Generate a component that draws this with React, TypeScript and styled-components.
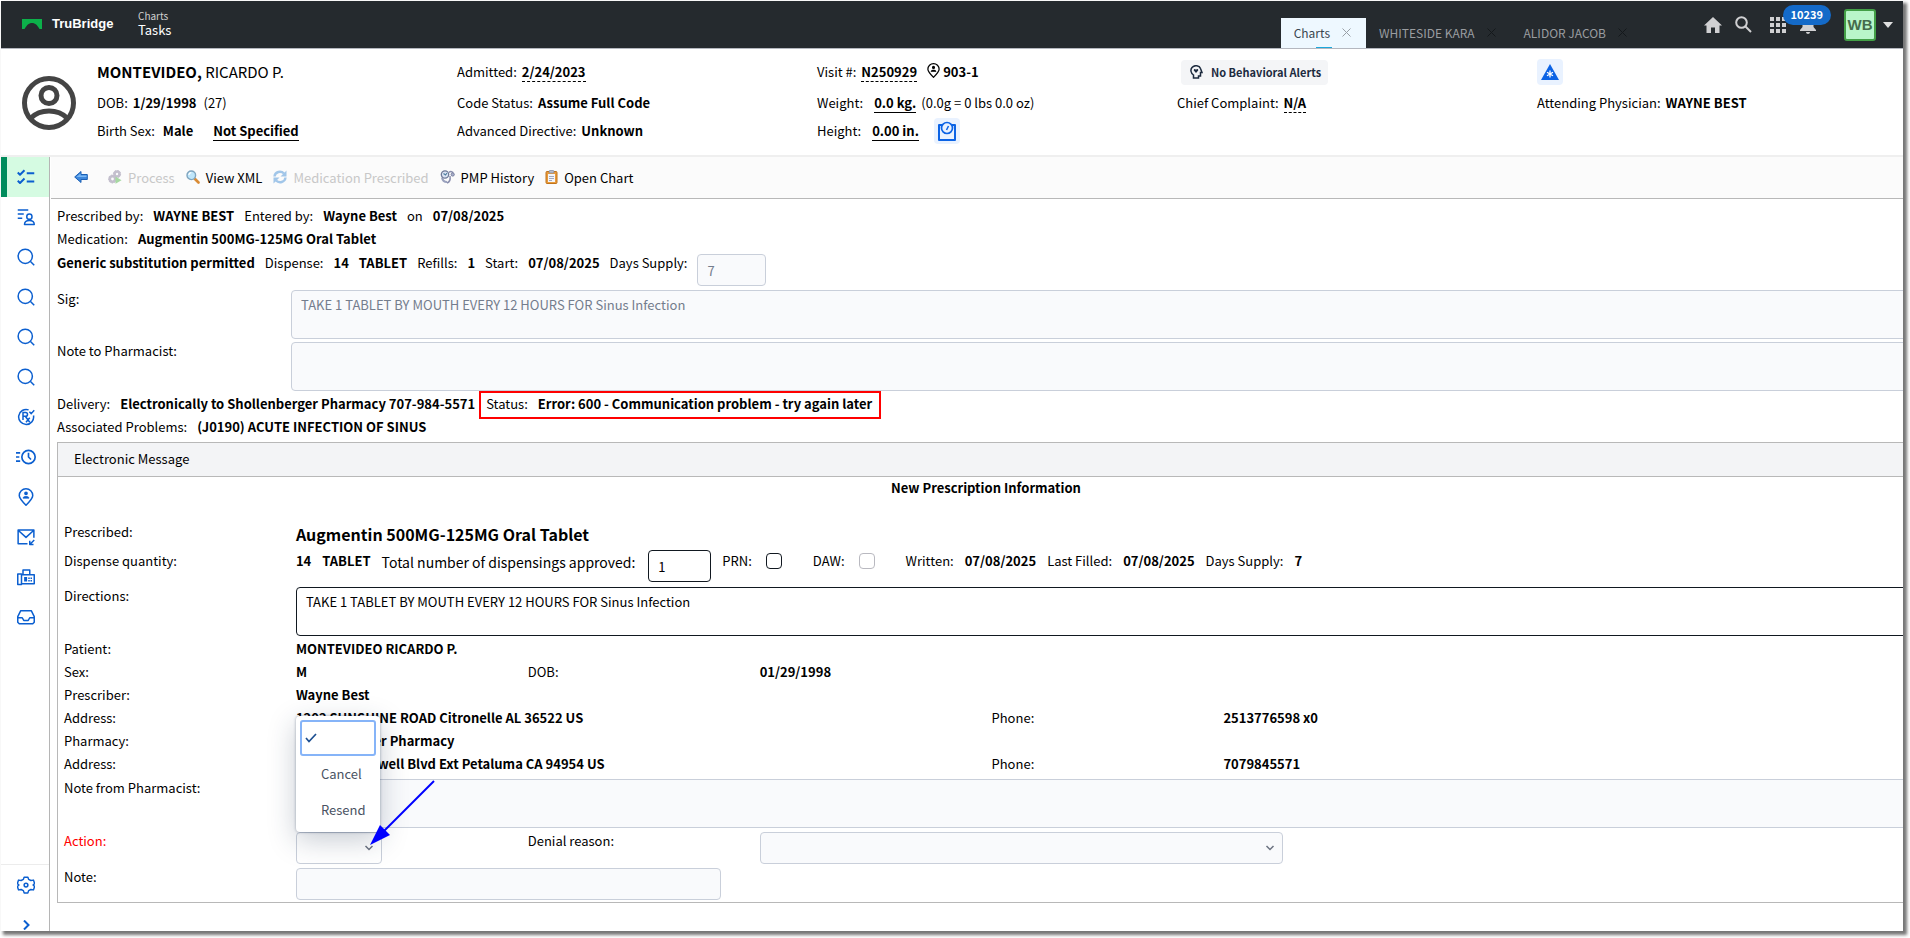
import React from "react";
import styled, { createGlobalStyle, css } from "styled-components";

const Global = createGlobalStyle`
  *, *::before, *::after { box-sizing: border-box; }
  body {
    margin: 0;
    background: #fff;
    color: #000;
    font-family: "Noto Sans CJK SC", "Noto Sans", sans-serif;
    font-size: 13px;
    line-height: 21px;
    overflow: hidden;
  }
  button, input, textarea, select { font: inherit; color: inherit; }
  button { background: none; border: 0; padding: 0; cursor: pointer; }
  ul { list-style: none; margin: 0; padding: 0; }
  svg { display: block; flex: none; }
`;

/* ---------- frame ---------- */
const Frame = styled.div`
  display: flex;
  flex-direction: column;
  height: calc(100vh - 8px);
  margin: 1px 7px 7px 1px;
  overflow: hidden;
  box-shadow: 3px 3px 3px 1px #777;
`;

/* ---------- top bar ---------- */
const TopBar = styled.header`
  display: flex;
  flex: none;
  height: 48px;
  padding-left: 21px;
  background: #252a2e;
  border-bottom: 1px solid #b4b7bf;
  color: #fff;
`;
const Brand = styled.a`
  display: flex;
  align-items: center;
  gap: 10px;
  width: 116px;
  padding-bottom: 2px;
  color: #fff;
  font: bold 13px/20px "Liberation Sans", Arial, sans-serif;
  text-decoration: none;
`;
const Crumbs = styled.div`
  display: flex;
  flex-direction: column;
  padding-top: 8px;
  flex: 1;
`;
const CrumbParent = styled.span`
  font-size: 10px;
  line-height: 14px;
  color: #d0d0d0;
`;
const CrumbTitle = styled.span`
  font-size: 13px;
  line-height: 14px;
`;
const Tabs = styled.nav`
  display: flex;
  align-items: flex-end;
  margin-right: 62px;
`;
const Tab = styled.div<{ $active?: boolean }>`
  position: relative;
  display: flex;
  align-items: center;
  gap: 12px;
  height: 30px;
  padding: 0 15px 1px 13px;
  font-size: 12px;
  line-height: 20px;
  color: ${(p) => (p.$active ? "#3a4650" : "#9a9da0")};
  background: ${(p) => (p.$active ? "#eef8ff" : "transparent")};
  ${(p) =>
    p.$active &&
    css`
      &::after {
        content: "";
        position: absolute;
        left: 35px;
        bottom: 0;
        width: 16px;
        height: 1px;
        background: #1ba8dc;
      }
    `}
`;
const TabClose = styled.button<{ $active?: boolean }>`
  color: ${(p) => (p.$active ? "#9aa0a6" : "#14181b")};
`;
const Tools = styled.div`
  display: flex;
  align-items: center;
  padding-right: 10px;
  color: #d0d0d2;
`;
const Tool = styled.button<{ $gap: number }>`
  position: relative;
  margin-right: ${(p) => p.$gap}px;
`;
const Badge = styled.span`
  position: absolute;
  right: -15px;
  top: -11px;
  height: 20px;
  padding: 0 8px;
  border-radius: 10px;
  background: #146ac8;
  color: #fff;
  font-size: 11px;
  font-weight: 700;
  line-height: 19px;
`;
const UserBox = styled.button`
  width: 32px;
  height: 32px;
  margin-right: 7px;
  border: 2px solid #43a047;
  border-radius: 3px;
  background: #b9f6ca;
  color: #456b4c;
  font: bold 15px/28px "Liberation Sans", Arial, sans-serif;
`;

/* ---------- patient banner ---------- */
const Banner = styled.section`
  display: flex;
  flex: none;
  height: 108px;
  padding: 0 6px 0 21px;
  border-bottom: 2px solid #efefef;
`;
const Avatar = styled.div`
  width: 75px;
  padding-top: 27px;
`;
const Facts = styled.div`
  display: grid;
  flex: 1;
  grid-template-columns: repeat(5, 1fr);
`;
const FactColumn = styled.div`
  display: grid;
  grid-template-rows: 32px 29px 27px;
  align-items: center;
  align-content: start;
  padding-top: 7px;
`;
const Fact = styled.div`
  display: flex;
  align-items: center;
  gap: 5px;
  line-height: 20px;
  white-space: nowrap;
`;
const PatientName = styled.span`
  font-size: 15px;
`;
const Link = styled.a<{ $dashed?: boolean; $gap?: number }>`
  height: 20px;
  margin-left: ${(p) => p.$gap ?? 0}px;
  border-bottom: 1px ${(p) => (p.$dashed ? "dashed" : "solid")} #000;
  color: #000;
  font-weight: 700;
  text-decoration: none;
`;
const AlertPill = styled.button`
  display: flex;
  align-items: center;
  gap: 8px;
  height: 25px;
  margin-left: 4px;
  padding: 0 7px 0 9px;
  border-radius: 4px;
  background: #f4f5f7;
  color: #1d2b3f;
  font-size: 11px;
  font-weight: 700;
`;
const IconButton = styled.button<{ $gap?: number }>`
  display: grid;
  place-items: center;
  width: 26px;
  height: 26px;
  margin-left: ${(p) => p.$gap ?? 0}px;
  border-radius: 4px;
  background: #e9f2ff;
  color: #0b63e5;
`;
const Spaced = styled.b<{ $gap: number }>`
  margin-left: ${(p) => p.$gap}px;
`;
const RoomPin = styled.span`
  margin-left: 4px;
  padding-bottom: 4px;
`;

/* ---------- side bar ---------- */
const Work = styled.div`
  display: flex;
  flex: 1;
  min-height: 0;
`;
const Side = styled.nav`
  display: flex;
  flex: none;
  flex-direction: column;
  justify-content: space-between;
  width: 49px;
  border-right: 1px solid #b5b5b5;
  color: #0b5fd0;
`;
const SideButton = styled.button<{ $active?: boolean }>`
  display: grid;
  place-items: center;
  width: 100%;
  height: 40px;
  padding-left: 2px;
  ${(p) =>
    p.$active &&
    css`
      background: #d5fbe2;
      border-left: 6px solid #008c5c;
      padding: 0 4px 0 0;
    `}
`;
const SideFoot = styled.div`
  height: 67px;
  border-top: 1px solid #ececec;
  overflow: hidden;
`;

/* ---------- main ---------- */
const Main = styled.main`
  flex: 1;
  min-width: 0;
  overflow: hidden;
`;
const Toolbar = styled.div`
  display: flex;
  align-items: center;
  gap: 11px;
  height: 42px;
  margin-left: 1px;
  padding: 0 0 1px 23px;
  background: #fbfbfb;
  border-bottom: 1px solid #b8b8b8;
`;
const ToolbarButton = styled.button`
  display: flex;
  align-items: center;
  gap: 6px;
  &:disabled {
    color: #c8c8c8;
  }
  &:disabled svg {
    opacity: 0.5;
  }
`;
const Content = styled.div`
  margin-right: -12px;
  padding: 6px 0 0 7px;
`;
const Line = styled.div`
  display: flex;
  align-items: flex-start;
  gap: 10px;
  height: 23px;
  white-space: nowrap;
`;
const SupplyLine = styled(Line)`
  height: 39px;
  padding-top: 1px;
`;
const OrderFields = styled.div`
  display: grid;
  grid-template-columns: 234px 1fr;
  row-gap: 3px;
  margin-bottom: 2px;
`;
const FieldLabel = styled.label<{ $required?: boolean }>`
  line-height: 18px;
  color: ${(p) => (p.$required ? "#f00" : "inherit")};
`;
const boxed = css`
  display: block;
  border: 1px solid #c9cfda;
  border-radius: 4px;
  background: #fff;
  &:disabled {
    background: #f9fafc;
    color: #747d8d;
    opacity: 1;
  }
`;
const Area = styled.textarea<{ $strong?: boolean }>`
  ${boxed}
  width: 100%;
  height: 49px;
  padding: 4px 9px;
  line-height: 20px;
  resize: none;
  overflow: hidden;
  border-color: ${(p) => (p.$strong ? "#111820" : "#c9cfda")};
`;
const TextField = styled.input<{ $strong?: boolean; $width: number }>`
  ${boxed}
  width: ${(p) => p.$width}px;
  height: 32px;
  padding: 0 9px;
  line-height: 20px;
  border-color: ${(p) => (p.$strong ? "#111820" : "#c9cfda")};
`;
const SupplyField = styled(TextField)`
  margin-top: 2px;
`;
const Flagged = styled.span`
  display: flex;
  gap: 10px;
  height: 24px;
  margin-left: -4px;
  padding: 0 7px 0 5px;
  outline: 2px solid #f00;
`;

/* ---------- message panel ---------- */
const Panel = styled.section`
  margin-top: 3px;
  border: 1px solid #b8b8b8;
`;
const PanelHead = styled.h2`
  height: 34px;
  margin: 0;
  padding: 5px 16px;
  background: #f3f4f6;
  border-bottom: 1px solid #b8b8b8;
  font-size: 13px;
  font-weight: 400;
`;
const PanelTitle = styled.h3`
  height: 44px;
  margin: 0;
  font-size: 13px;
  font-weight: 700;
  text-align: center;
`;
const PanelBody = styled.div`
  margin-right: -5px;
  padding: 0 0 2px 6px;
`;
const Row = styled.div<{ $after?: number }>`
  display: grid;
  grid-template-columns: repeat(8, minmax(0, 1fr));
  min-height: 23px;
  margin-bottom: ${(p) => p.$after ?? 0}px;
  white-space: nowrap;
`;
const Cell = styled.div<{ $span?: number }>`
  position: relative;
  grid-column: span ${(p) => p.$span ?? 1};
`;
const DrugName = styled(Cell)`
  height: 28px;
  font-size: 16px;
  font-weight: 700;
  line-height: 26px;
`;
const DispenseCell = styled(Line)`
  grid-column: span 7;
  gap: 11px;
  height: 38px;
  padding-top: 1px;
`;
const Approved = styled.label`
  margin-right: 2px;
  font-size: 14px;
  line-height: 24px;
`;
const DispenseLabel = styled.span`
  padding-top: 1px;
`;
const Tick = styled.input`
  appearance: none;
  width: 16px;
  height: 16px;
  margin: 3px 20px 0 3px;
  border: 1px solid #111820;
  border-radius: 4px;
  background: #fff;
  &:disabled {
    border-color: #b9b9c0;
  }
`;
const SelectWrap = styled.div<{ $width?: number }>`
  position: relative;
  width: ${(p) => (p.$width ? `${p.$width}px` : "auto")};
  margin-right: ${(p) => (p.$width ? 0 : 172)}px;
`;
const Select = styled.select`
  ${boxed}
  appearance: none;
  width: 100%;
  height: 32px;
  padding: 0 9px;
`;
const SelectMark = styled.span`
  position: absolute;
  right: 8px;
  top: 11px;
  color: #6b7280;
  pointer-events: none;
`;
const Menu = styled.ul`
  position: absolute;
  left: 0;
  bottom: 32px;
  width: 84px;
  padding: 4px;
  border-radius: 4px;
  background: #fff;
  color: #4a5363;
  box-shadow: 0 8px 28px rgba(30, 50, 80, 0.25), 0 0 3px rgba(30, 50, 80, 0.4);
`;
const Option = styled.li<{ $focused?: boolean }>`
  display: flex;
  align-items: center;
  height: 36px;
  padding: ${(p) => (p.$focused ? "0 0 0 3px" : "0 0 2px 21px")};
  border: ${(p) => (p.$focused ? "2px solid #86b4f8" : "0")};
  border-radius: 3px;
`;
const Pointer = styled.svg`
  position: absolute;
  left: 74px;
  top: -52px;
  pointer-events: none;
`;

/* ---------- icons ---------- */
const Stroke = ({
  size = 18,
  width = 2,
  children,
}: {
  size?: number;
  width?: number;
  children: React.ReactNode;
}) => (
  <svg
    width={size}
    height={size}
    viewBox="0 0 24 24"
    fill="none"
    stroke="currentColor"
    strokeWidth={width}
    strokeLinejoin="round"
  >
    {children}
  </svg>
);
const Chevron = () => (
  <svg width="10" height="10" viewBox="0 0 10 10" fill="none" stroke="currentColor" strokeWidth="1.5">
    <path d="M1.5 3 5 6.5 8.5 3" />
  </svg>
);
const Cross = () => (
  <svg width="9" height="9" viewBox="0 0 9 9" stroke="currentColor" strokeWidth="1">
    <path d="M.5.5l8 8M8.5.5l-8 8" />
  </svg>
);
const SearchGlyph = () => (
  <Stroke>
    <circle cx="11" cy="11" r="9.5" />
    <path d="M18 18l5 5" />
  </Stroke>
);
const Pin = ({ size = 18, width = 2 }: { size?: number; width?: number }) => (
  <Stroke size={size} width={width}>
    <path d="M12 23C6 17 3 14 3 10a9 9 0 0 1 18 0c0 4-3 7-9 13z" />
    <circle cx="12" cy="7" r="1.5" fill="currentColor" />
    <path d="M8 13.5c0-3 8-3 8 0z" fill="currentColor" strokeWidth="1" />
  </Stroke>
);

const sideItems: { name: string; icon: React.ReactNode }[] = [
  {
    name: "Tasks",
    icon: (
      <Stroke width={2.6}>
        <path d="M1 6l3 3 6-6M1 17l3 3 6-6M13 7h10M13 18h10" />
      </Stroke>
    ),
  },
  {
    name: "Patient list",
    icon: (
      <Stroke>
        <path d="M1 2.500h14M1 8h8M1 13.500h6" />
        <circle cx="16.500" cy="11.500" r="3.500" />
        <path d="M10 22c0-7 13-7 13 0z" />
      </Stroke>
    ),
  },
  { name: "Search one", icon: <SearchGlyph /> },
  { name: "Search two", icon: <SearchGlyph /> },
  { name: "Search three", icon: <SearchGlyph /> },
  { name: "Search four", icon: <SearchGlyph /> },
  {
    name: "Prescriptions",
    icon: (
      <Stroke>
        <path d="M15.500 2.500A10 10 0 1 0 22 10" />
        <path d="M8 16V6h3.500a2.500 2.500 0 0 1 0 5H8M11 11l6 8M17 13l-5 6M16.500 5l2.500 2.500L23 3" />
      </Stroke>
    ),
  },
  {
    name: "Recent",
    icon: (
      <Stroke size={20}>
        <circle cx="15" cy="12" r="8" />
        <path d="M15 7v5l3 3M0 7h5M0 12h4M0 17h5" />
      </Stroke>
    ),
  },
  { name: "Location", icon: <Pin /> },
  {
    name: "Messages",
    icon: (
      <Stroke>
        <path d="M14 21H1.500V2.500h21V13M1.500 3L12 12.500 22.500 3M23 16l-6 6M17 17v5h5" />
      </Stroke>
    ),
  },
  {
    name: "Fax",
    icon: (
      <Stroke>
        <path d="M1 8h5v14H1zM6 9h17v12H6zM8 9V2.500h9V9" />
        <path d="M9.500 12h4v6h-4z" fill="currentColor" stroke="none" />
        <path d="M15 13.500h5M15 17h5" strokeDasharray="2 1" />
      </Stroke>
    ),
  },
  {
    name: "Inbox",
    icon: (
      <Stroke>
        <path d="M5 3.500h14l4 8V19l-2 2H3l-2-2v-7.500zM1 13h6l2 3.500h6l2-3.500h6" />
      </Stroke>
    ),
  },
];

const BackArrow = () => (
  <svg width="14" height="14" viewBox="0 0 14 14">
    <path d="M.7 7 7 1.500v3h6.300v5H7v3z" fill="#3d87dc" stroke="#1b5fb4" />
    <path d="M2.500 7 6.500 3.500V5.500h6V7z" fill="#7ab8f4" />
  </svg>
);
const ProcessIcon = () => (
  <svg width="14" height="14" viewBox="0 0 14 14">
    <circle cx="9" cy="4" r="2.500" fill="none" stroke="#8d84a0" strokeWidth="2.600" />
    <circle cx="9" cy="4" r="3.600" fill="none" stroke="#8d84a0" strokeWidth="1" strokeDasharray="1.500 1.300" />
    <circle cx="4.500" cy="9" r="2.700" fill="none" stroke="#8d84a0" strokeWidth="2.600" />
    <circle cx="4.500" cy="9" r="4" fill="none" stroke="#8d84a0" strokeWidth="1" strokeDasharray="1.500 1.300" />
    <path d="M7.500 6.500l6 3.700-6 3.600z" fill="#55b74c" />
  </svg>
);
const LensIcon = () => (
  <svg width="14" height="14" viewBox="0 0 14 14">
    <path d="M8.500 8.500l4 4" stroke="#d98b35" strokeWidth="2.600" strokeLinecap="round" />
    <circle cx="5.300" cy="5.300" r="4.300" fill="#bfe6fa" stroke="#7fa5bf" strokeWidth="1.400" />
    <path d="M2.800 5a2.800 2.800 0 0 1 2.500-2.300" fill="none" stroke="#fff" strokeWidth="1.200" />
  </svg>
);
const RefreshIcon = () => (
  <svg width="14" height="14" viewBox="0 0 14 14" fill="none" stroke="#4a92d8" strokeWidth="2.400">
    <path d="M1.500 6.500C2 1.500 8 .5 11 3.500M12.500 7.500c-.5 5-6.500 6-9.500 3" />
    <path d="M13.500 .5v6h-6zM.5 13.500v-6h6z" fill="#4a92d8" stroke="none" />
  </svg>
);
const ScopeIcon = () => (
  <svg width="15" height="14" viewBox="0 0 15 14" fill="none">
    <path d="M2 7.500c.5 3 2.500 4.500 5 4.500" stroke="#9aa1bd" strokeWidth="2" />
    <path d="M7 13c3-1 3.500-4 3-7M9 2.500c1.500-1.500 4-1 4 1" stroke="#8a8fae" strokeWidth="1.500" />
    <circle cx="5" cy="4.500" r="3.700" fill="#dbe3f2" stroke="#6f7a98" strokeWidth="1.300" />
    <path d="M3.500 3.500L5.500 5l1.500-2" stroke="#4f7fa0" strokeWidth="1.200" />
    <circle cx="12.700" cy="4.500" r="1.600" fill="#a9afcb" stroke="#777f9f" />
  </svg>
);
const ClipboardIcon = () => (
  <svg width="13" height="14" viewBox="0 0 13 14">
    <rect x="1" y="1.500" width="11" height="12" rx="1" fill="#e89b3c" stroke="#c0731b" />
    <rect x="3" y="4" width="7" height="8" fill="#f3f5fa" />
    <path d="M4 6.500h5M4 8.500h5M4 10.500h3" stroke="#8c96b0" strokeWidth=".8" />
    <rect x="4" y=".5" width="5" height="2.500" rx="1" fill="#b7bccb" stroke="#80869a" strokeWidth=".7" />
  </svg>
);

const Fields = ({ cells }: { cells: string[] }) => (
  <Row>
    {cells.map((text, i) => (
      <Cell key={i}>{i % 2 ? <b>{text}</b> : text}</Cell>
    ))}
  </Row>
);

export default function App() {
  return (
    <>
      <Global />
      <Frame>
        <TopBar>
          <Brand href="#">
            <svg width="20" height="10" viewBox="0 0 20 10">
              <path d="M0 0h20v10h-2.500C15 5.500 12.500 4 10 4S5 5.500 2.500 10H0z" fill="#0cb04a" />
            </svg>
            TruBridge
          </Brand>
          <Crumbs>
            <CrumbParent>Charts</CrumbParent>
            <CrumbTitle>Tasks</CrumbTitle>
          </Crumbs>
          <Tabs aria-label="Open charts">
            {["Charts", "WHITESIDE KARA", "ALIDOR JACOB"].map((name, i) => (
              <Tab key={name} $active={i === 0}>
                {name}
                <TabClose aria-label={`Close ${name}`} $active={i === 0}>
                  <Cross />
                </TabClose>
              </Tab>
            ))}
          </Tabs>
          <Tools>
            <Tool $gap={13} aria-label="Home">
              <svg width="18" height="16" viewBox="0 0 18 16" fill="currentColor">
                <path d="M9 0l9 8.500h-2.500V16H11v-5.500H7V16H2.500V8.500H0z" />
              </svg>
            </Tool>
            <Tool $gap={18} aria-label="Search">
              <svg width="17" height="17" viewBox="0 0 17 17" fill="none" stroke="currentColor" strokeWidth="2">
                <circle cx="6.500" cy="6.500" r="5.300" />
                <path d="M10.500 10.500l5.500 5.500" />
              </svg>
            </Tool>
            <Tool $gap={14} aria-label="Apps">
              <svg width="16" height="16" viewBox="0 0 16 16" fill="currentColor">
                <path d="M0 0h4v4H0zM6 0h4v4H6zM12 0h4v4h-4zM0 6h4v4H0zM6 6h4v4H6zM12 6h4v4h-4zM0 12h4v4H0zM6 12h4v4H6zM12 12h4v4h-4z" />
              </svg>
            </Tool>
            <Tool $gap={28} aria-label="Notifications">
              <svg width="16" height="18" viewBox="0 0 16 18" fill="currentColor">
                <path d="M8 0c4 0 5.500 3 5.500 6v5L16 14v1H0v-1l2.500-3V6C2.500 3 4 0 8 0zM6 16h4c0 2.500-4 2.500-4 0z" />
              </svg>
              <Badge>10239</Badge>
            </Tool>
            <UserBox>WB</UserBox>
            <svg width="10" height="6" viewBox="0 0 10 6" fill="#e0e0e0">
              <path d="M0 0h10L5 6z" />
            </svg>
          </Tools>
        </TopBar>

        <Banner>
          <Avatar>
            <svg width="54" height="54" viewBox="0 0 54 54" fill="none" stroke="#444" strokeWidth="5">
              <circle cx="27" cy="27" r="24.500" />
              <circle cx="27" cy="19.500" r="8" />
              <path d="M9 42c9-9.500 27-9.500 36 0" />
            </svg>
          </Avatar>
          <Facts>
            <FactColumn>
              <Fact>
                <PatientName>
                  <b>MONTEVIDEO,</b> RICARDO P.
                </PatientName>
              </Fact>
              <Fact>
                DOB: <b>1/29/1998</b> <Spaced as="span" $gap={2}>(27)</Spaced>
              </Fact>
              <Fact>
                Birth Sex: <Spaced $gap={3}>Male</Spaced>
                <Link href="#" $gap={15}>
                  Not Specified
                </Link>
              </Fact>
            </FactColumn>
            <FactColumn>
              <Fact>
                Admitted:
                <Link href="#" $dashed>
                  2/24/2023
                </Link>
              </Fact>
              <Fact>
                Code Status: <b>Assume Full Code</b>
              </Fact>
              <Fact>
                Advanced Directive: <b>Unknown</b>
              </Fact>
            </FactColumn>
            <FactColumn>
              <Fact>
                Visit #:
                <Link href="#" $dashed>
                  N250929
                </Link>
                <RoomPin>
                  <Pin size={15} />
                </RoomPin>
                <Spaced $gap={-3}>903-1</Spaced>
              </Fact>
              <Fact>
                Weight:
                <Link href="#" $gap={6}>
                  0.0 kg.
                </Link>
                (0.0g = 0 lbs 0.0 oz)
              </Fact>
              <Fact>
                Height:
                <Link href="#" $gap={6}>
                  0.00 in.
                </Link>
                <IconButton $gap={10} aria-label="Record measurements">
                  <svg width="18" height="20" viewBox="0 0 18 20" fill="none" stroke="currentColor" strokeWidth="2">
                    <path d="M4 4H1v15h16V4h-3" strokeLinejoin="round" />
                    <circle cx="9" cy="7" r="5.500" strokeWidth="1.700" />
                    <path d="M8.500 9l2-4" strokeWidth="1.500" />
                  </svg>
                </IconButton>
              </Fact>
            </FactColumn>
            <FactColumn>
              <Fact>
                <AlertPill>
                  <svg width="13" height="14" viewBox="0 0 13 14" fill="none" stroke="currentColor" strokeWidth="1.500">
                    <path d="M3.500 13V10C.5 8 .3 4.500 2 2.500c2.500-3 7.500-2 8.500 1l1.500 4h-1.500V11H8.500v2z" />
                    <path d="M6 8L3.800 5.500C3.500 4 5.500 3.500 6 5c.5-1.500 2.500-1 2.200.5z" fill="currentColor" stroke="none" />
                  </svg>
                  No Behavioral Alerts
                </AlertPill>
              </Fact>
              <Fact>
                Chief Complaint:
                <Link href="#" $dashed>
                  N/A
                </Link>
              </Fact>
            </FactColumn>
            <FactColumn>
              <Fact>
                <IconButton aria-label="Allergies">
                  <svg width="18" height="16" viewBox="0 0 18 16">
                    <path d="M9 0l9 16H0z" fill="currentColor" />
                    <path d="M9 6.500v7M6 8.200l6 3.600M12 8.200l-6 3.600" stroke="#fff" strokeWidth="1.300" />
                  </svg>
                </IconButton>
              </Fact>
              <Fact>
                Attending Physician: <b>WAYNE BEST</b>
              </Fact>
            </FactColumn>
          </Facts>
        </Banner>

        <Work>
          <Side aria-label="Sections">
            <div>
              {sideItems.map((item, i) => (
                <SideButton key={item.name} aria-label={item.name} $active={i === 0}>
                  {item.icon}
                </SideButton>
              ))}
            </div>
            <SideFoot>
              <SideButton aria-label="Settings">
                <Stroke>
                  <path d="M9.500 1.500h5l1 3 3 1.500 3.500-.5 1.500 4.500-2 2 2 2-1.500 4.500-3.500-.5-3 1.500-1 3h-5l-1-3-3-1.500-3.500.5L.5 14l2-2-2-2L2 5.500l3.500.5 3-1.500z" />
                  <circle cx="12" cy="12" r="2.500" />
                </Stroke>
              </SideButton>
              <SideButton aria-label="Expand">
                <svg width="10" height="10" viewBox="0 0 10 10" fill="none" stroke="currentColor" strokeWidth="2">
                  <path d="M3 .5L7.500 5 3 9.500" />
                </svg>
              </SideButton>
            </SideFoot>
          </Side>

          <Main>
            <Toolbar>
              <ToolbarButton aria-label="Back">
                <BackArrow />
              </ToolbarButton>
              <Spaced as="span" $gap={9}>
                <ToolbarButton disabled>
                  <ProcessIcon />
                  Process
                </ToolbarButton>
              </Spaced>
              <ToolbarButton>
                <LensIcon />
                View XML
              </ToolbarButton>
              <ToolbarButton disabled>
                <RefreshIcon />
                Medication Prescribed
              </ToolbarButton>
              <ToolbarButton>
                <ScopeIcon />
                PMP History
              </ToolbarButton>
              <ToolbarButton>
                <ClipboardIcon />
                Open Chart
              </ToolbarButton>
            </Toolbar>

            <Content>
              <Line>
                <span>Prescribed by:</span>
                <b>WAYNE BEST</b>
                <span>Entered by:</span>
                <b>Wayne Best</b>
                <span>on</span>
                <b>07/08/2025</b>
              </Line>
              <Line>
                <span>Medication:</span>
                <b>Augmentin 500MG-125MG Oral Tablet</b>
              </Line>
              <SupplyLine>
                <b>Generic substitution permitted</b>
                <span>Dispense:</span>
                <b>14</b>
                <b>TABLET</b>
                <span>Refills:</span>
                <b>1</b>
                <span>Start:</span>
                <b>07/08/2025</b>
                <label htmlFor="supply">Days Supply:</label>
                <SupplyField id="supply" $width={69} defaultValue="7" disabled />
              </SupplyLine>
              <OrderFields>
                <FieldLabel htmlFor="sig">Sig:</FieldLabel>
                <Area id="sig" disabled defaultValue="TAKE 1 TABLET BY MOUTH EVERY 12 HOURS FOR Sinus Infection" />
                <FieldLabel htmlFor="toPharmacist">Note to Pharmacist:</FieldLabel>
                <Area id="toPharmacist" disabled />
              </OrderFields>
              <Line>
                <span>Delivery:</span>
                <b>Electronically to Shollenberger Pharmacy 707-984-5571</b>
                <Flagged>
                  <span>Status:</span>
                  <b>Error: 600 - Communication problem - try again later</b>
                </Flagged>
              </Line>
              <Line>
                <span>Associated Problems:</span>
                <b>(J0190) ACUTE INFECTION OF SINUS</b>
              </Line>

              <Panel>
                <PanelHead>Electronic Message</PanelHead>
                <PanelTitle>New Prescription Information</PanelTitle>
                <PanelBody>
                  <Row>
                    <Cell>Prescribed:</Cell>
                    <DrugName $span={7}>Augmentin 500MG-125MG Oral Tablet</DrugName>
                  </Row>
                  <Row>
                    <DispenseLabel>Dispense quantity:</DispenseLabel>
                    <DispenseCell>
                      <b>14</b>
                      <b>TABLET</b>
                      <Approved htmlFor="approved">Total number of dispensings approved:</Approved>
                      <TextField id="approved" $strong $width={63} defaultValue="1" />
                      <label htmlFor="prn">PRN:</label>
                      <Tick id="prn" type="checkbox" />
                      <label htmlFor="daw">DAW:</label>
                      <Tick id="daw" type="checkbox" disabled />
                      <span>Written:</span>
                      <b>07/08/2025</b>
                      <span>Last Filled:</span>
                      <b>07/08/2025</b>
                      <span>Days Supply:</span>
                      <b>7</b>
                    </DispenseCell>
                  </Row>
                  <Row $after={2}>
                    <FieldLabel htmlFor="directions">Directions:</FieldLabel>
                    <Cell $span={7}>
                      <Area
                        id="directions"
                        $strong
                        defaultValue="TAKE 1 TABLET BY MOUTH EVERY 12 HOURS FOR Sinus Infection"
                      />
                    </Cell>
                  </Row>
                  <Fields cells={["Patient:", "MONTEVIDEO RICARDO P."]} />
                  <Fields cells={["Sex:", "M", "DOB:", "01/29/1998"]} />
                  <Fields cells={["Prescriber:", "Wayne Best"]} />
                  <Row>
                    <Cell>Address:</Cell>
                    <Cell $span={3}>
                      <b>1202 SUNSHINE ROAD Citronelle AL 36522 US</b>
                    </Cell>
                    <Cell>Phone:</Cell>
                    <Cell>
                      <b>2513776598 x0</b>
                    </Cell>
                  </Row>
                  <Fields cells={["Pharmacy:", "Shollenberger Pharmacy"]} />
                  <Row $after={3}>
                    <Cell>Address:</Cell>
                    <Cell $span={3}>
                      <b>1179 N McDowell Blvd Ext Petaluma CA 94954 US</b>
                    </Cell>
                    <Cell>Phone:</Cell>
                    <Cell>
                      <b>7079845571</b>
                    </Cell>
                  </Row>
                  <Row $after={4}>
                    <FieldLabel htmlFor="fromPharmacist">Note from Pharmacist:</FieldLabel>
                    <Cell $span={7}>
                      <Area id="fromPharmacist" disabled />
                    </Cell>
                  </Row>
                  <Row $after={4}>
                    <FieldLabel htmlFor="action" $required>
                      Action:
                    </FieldLabel>
                    <Cell>
                      <SelectWrap $width={86}>
                        <Select id="action" />
                        <SelectMark>
                          <Chevron />
                        </SelectMark>
                        <Menu role="listbox" aria-label="Action">
                          <Option role="option" aria-selected $focused>
                            <svg width="12" height="10" viewBox="0 0 12 10" fill="none" stroke="#1d4f91" strokeWidth="1.700">
                              <path d="M1 5l3 3.500L11 1" />
                            </svg>
                          </Option>
                          <Option role="option">Cancel</Option>
                          <Option role="option">Resend</Option>
                        </Menu>
                        <Pointer width="66" height="66" viewBox="0 0 66 66">
                          <path d="M64 1L12 53" stroke="#00f" strokeWidth="2" />
                          <path d="M0 65L10 45 20 55z" fill="#00f" />
                        </Pointer>
                      </SelectWrap>
                    </Cell>
                    <FieldLabel htmlFor="denial">Denial reason:</FieldLabel>
                    <Cell $span={3}>
                      <SelectWrap>
                        <Select id="denial" disabled />
                        <SelectMark>
                          <Chevron />
                        </SelectMark>
                      </SelectWrap>
                    </Cell>
                  </Row>
                  <Row>
                    <FieldLabel htmlFor="note">Note:</FieldLabel>
                    <Cell $span={2}>
                      <TextField id="note" $width={425} disabled />
                    </Cell>
                  </Row>
                </PanelBody>
              </Panel>
            </Content>
          </Main>
        </Work>
      </Frame>
    </>
  );
}
